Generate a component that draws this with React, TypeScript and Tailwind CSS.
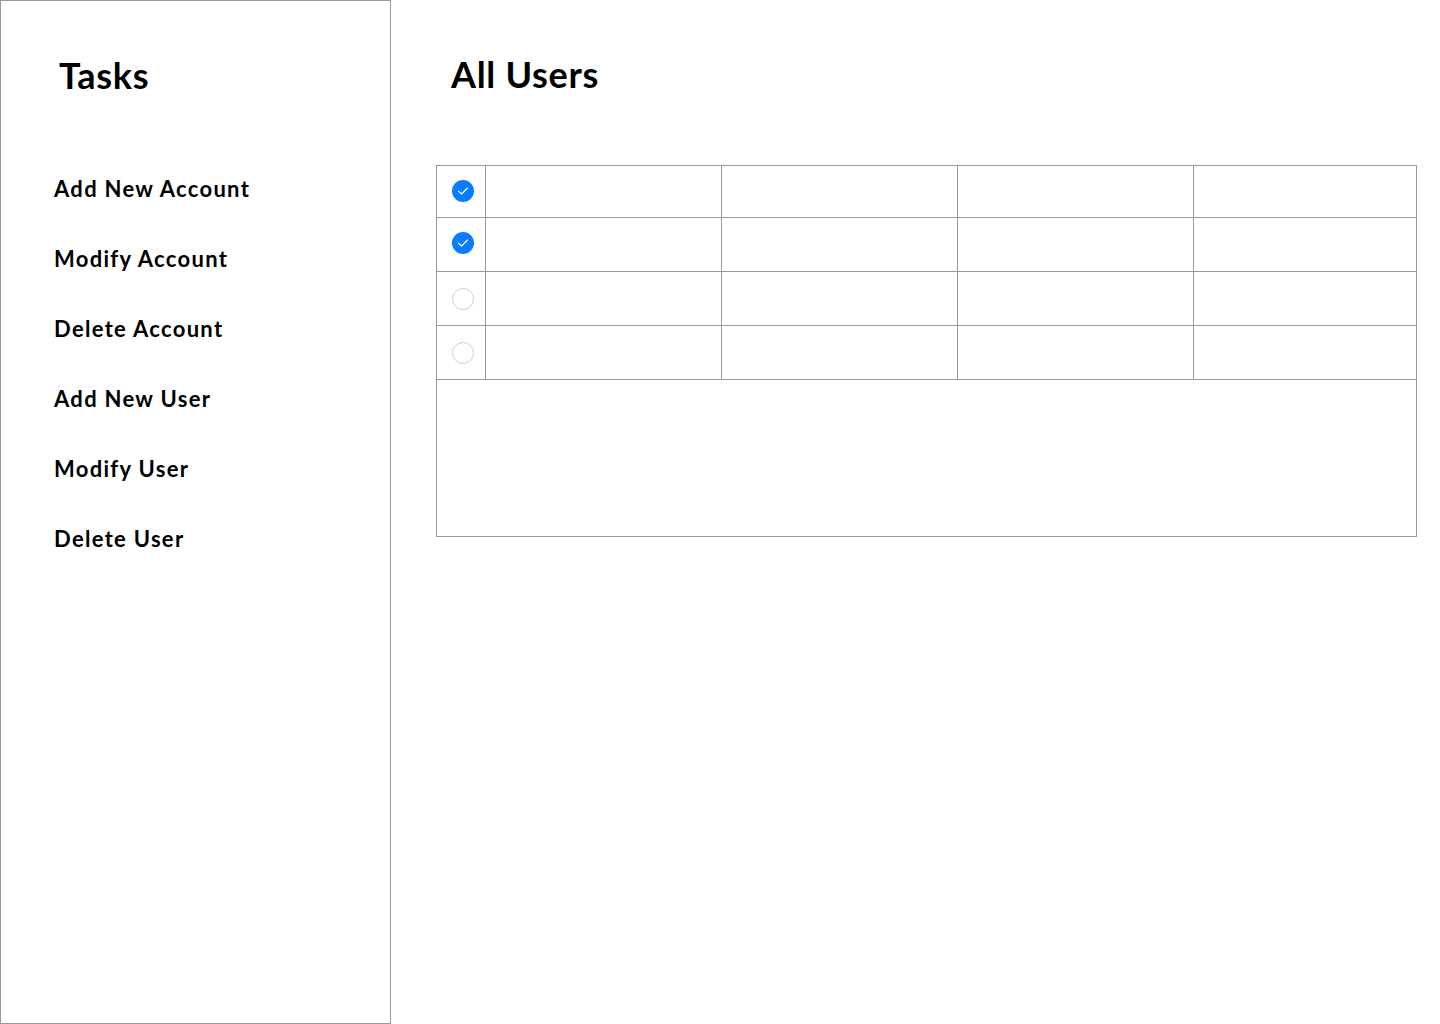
import React from "react";

const items = [
  "Add New Account",
  "Modify Account",
  "Delete Account",
  "Add New User",
  "Modify User",
  "Delete User",
];

const rows = [
  { checked: true, h: "h-[52px]" },
  { checked: true, h: "h-[54px]" },
  { checked: false, h: "h-[54px]" },
  { checked: false, h: "h-[54px]" },
];

function Check({ checked }: { checked: boolean }) {
  if (checked) {
    return (
      <div className="w-[22px] h-[22px] rounded-full bg-[#0b7bff] flex items-center justify-center">
        <svg width="12" height="10" viewBox="0 0 12 10" fill="none">
          <path d="M1.5 5.2 L4.5 8 L10.5 2" stroke="white" strokeWidth="1.1" strokeLinecap="round" strokeLinejoin="round" />
        </svg>
      </div>
    );
  }
  return <div className="w-[22px] h-[22px] rounded-full border border-[#d0d0d0] bg-white" />;
}

export default function App() {
  return (
    <div className="flex w-[1440px] h-[1024px] bg-white text-black" style={{ fontFamily: "Lato, 'Noto Sans', sans-serif" }}>
      <aside className="w-[391px] h-[1024px] border border-[#999] shrink-0 flex flex-col">
        <h1 className="pl-[58px] pt-[51px] text-[36px] leading-[46px] font-bold tracking-[0.7px]">Tasks</h1>
        <nav className="flex flex-col pl-[53px] pt-[77px] gap-[42px]">
          {items.map((t) => (
            <div key={t} className="text-[22px] leading-[28px] font-bold tracking-[1.3px]">{t}</div>
          ))}
        </nav>
      </aside>
      <main className="flex-1 flex flex-col">
        <h1 className="pl-[60px] pt-[51px] text-[36px] leading-[46px] font-bold tracking-[0.7px]">All Users</h1>
        <div className="ml-[45px] mt-[68px] w-[981px] border border-[#999]">
          {rows.map((r, i) => (
            <div key={i} className={`flex ${r.h} border-b border-[#999]`}>
              <div className={`w-[49px] border-r border-[#999] flex items-center pl-[15px] ${i === 0 ? "pb-[1px]" : ""} ${i === 1 ? "pb-[3px]" : ""}`}>
                <Check checked={r.checked} />
              </div>
              <div className="w-[236px] border-r border-[#999]" />
              <div className="w-[236px] border-r border-[#999]" />
              <div className="w-[236px] border-r border-[#999]" />
              <div className="flex-1" />
            </div>
          ))}
          <div className="h-[156px]" />
        </div>
      </main>
    </div>
  );
}
